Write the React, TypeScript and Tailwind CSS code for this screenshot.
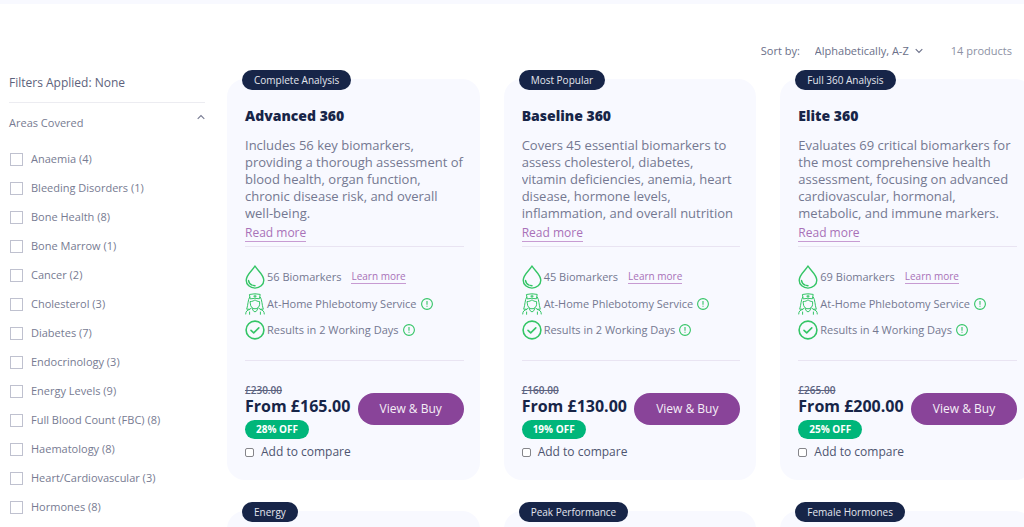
import { useState } from "react";

type Product = {
  id: string;
  tag: string;
  name: string;
  description: string;
  biomarkers: number;
  days: number;
  was: string;
  price: string;
  discount: string;
};

const PRODUCTS: Product[] = [
  {
    id: "advanced-360",
    tag: "Complete Analysis",
    name: "Advanced 360",
    description:
      "Includes 56 key biomarkers, providing a thorough assessment of blood health, organ function, chronic disease risk, and overall well-being.",
    biomarkers: 56,
    days: 2,
    was: "£230.00",
    price: "£165.00",
    discount: "28% OFF"
  },
  {
    id: "baseline-360",
    tag: "Most Popular",
    name: "Baseline 360",
    description:
      "Covers 45 essential biomarkers to assess cholesterol, diabetes, vitamin deficiencies, anemia, heart disease, hormone levels, inflammation, and overall nutrition",
    biomarkers: 45,
    days: 2,
    was: "£160.00",
    price: "£130.00",
    discount: "19% OFF"
  },
  {
    id: "elite-360",
    tag: "Full 360 Analysis",
    name: "Elite 360",
    description:
      "Evaluates 69 critical biomarkers for the most comprehensive health assessment, focusing on advanced cardiovascular, hormonal, metabolic, and immune markers.",
    biomarkers: 69,
    days: 4,
    was: "£265.00",
    price: "£200.00",
    discount: "25% OFF"
  }
];

const NEXT_TAGS = ["Energy", "Peak Performance", "Female Hormones"];

const AREAS = [
  { name: "Anaemia", count: 4 },
  { name: "Bleeding Disorders", count: 1 },
  { name: "Bone Health", count: 8 },
  { name: "Bone Marrow", count: 1 },
  { name: "Cancer", count: 2 },
  { name: "Cholesterol", count: 3 },
  { name: "Diabetes", count: 7 },
  { name: "Endocrinology", count: 3 },
  { name: "Energy Levels", count: 9 },
  { name: "Full Blood Count (FBC)", count: 8 },
  { name: "Haematology", count: 8 },
  { name: "Heart/Cardiovascular", count: 3 },
  { name: "Hormones", count: 8 }
];

const Chevron = ({ className }: { className?: string }) => (
  <svg viewBox="0 0 8 6" className={className} fill="none" stroke="currentColor" strokeWidth="1.1" aria-hidden="true">
    <path d="M0.7 1.2 4 4.5 7.3 1.2" />
  </svg>
);

const DropIcon = () => (
  <svg viewBox="0 0 20 24" className="h-6 w-5 shrink-0" fill="none" stroke="#34c566" strokeWidth="1.4" aria-hidden="true">
    <path d="M10 1C8.2 4.6 1.2 9.6 1.2 15.2a8.8 7.9 0 0 0 17.6 0C18.8 9.6 11.8 4.6 10 1Z" strokeLinejoin="round" />
    <path d="M3.5 15.4c.3 2.3 1.6 3.9 3.6 4.7M8.2 20.4l1.8.3" strokeLinecap="round" />
  </svg>
);

const NurseIcon = () => (
  <svg viewBox="0 0 20 22" className="h-[22px] w-5 shrink-0" fill="none" stroke="#34c566" strokeWidth="1" strokeLinejoin="round" strokeLinecap="round" aria-hidden="true">
    <path d="M4.8 1.4Q10 .1 15.2 1.4l-.8 4.4Q10 4.7 5.6 5.8Z" />
    <path d="M10 2v2.4M8.8 3.2h2.4" />
    <path d="M4.6 4.2C2.8 7 3.2 11.5 1.7 16.2h3.1l1.6-1.1M15.4 4.2c1.8 2.8 1.4 7.3 2.9 12h-3.1l-1.6-1.1" />
    <path d="M5.4 8.6c2.2-.2 3.5-.8 4.6-1.8 1.1 1 2.4 1.6 4.6 1.8v2.7c0 2.3-2 4.5-4.6 4.5s-4.6-2.2-4.6-4.5Z" />
    <path d="M7.7 15.5v1.7L10 19l2.3-1.8v-1.7M4.6 16.5C2.1 17 .7 18.3.7 21M15.4 16.5c2.5.5 3.9 1.8 3.9 4.5M4.6 19v2.3M15.4 19v2.3" />
  </svg>
);

const TickIcon = () => (
  <svg viewBox="0 0 20 20" className="size-5 shrink-0" fill="none" stroke="#34c566" strokeWidth="1.6" strokeLinecap="round" strokeLinejoin="round" aria-hidden="true">
    <circle cx="10" cy="10" r="8.9" />
    <path d="m6 10.3 2.7 2.5 5.1-4.9" />
  </svg>
);

const InfoButton = ({ label }: { label: string }) => (
  <button type="button" aria-label={label} className="ml-0.5 shrink-0">
    <svg viewBox="0 0 12 12" className="size-3" fill="none" stroke="#34c566" strokeWidth="1.1" aria-hidden="true">
      <circle cx="6" cy="6" r="5.4" />
      <path d="M6 3v3.7M6 7.8v1" />
    </svg>
  </button>
);

const Tag = ({ children }: { children: string }) => (
  <span className="absolute -top-[9px] left-[15px] flex h-5 items-center rounded-full bg-[#172548] px-3 text-[10px] whitespace-nowrap text-[#e3e5ee]">
    {children}
  </span>
);

const ProductCard = ({ product }: { product: Product }) => {
  const [compare, setCompare] = useState(false);

  return (
    <article className="relative rounded-[18px] bg-[#f8f9ff] pt-7 pr-4 pb-[19px] pl-[18px]">
      <Tag>{product.tag}</Tag>
      <h2 className="text-[14px] leading-[18px] font-extrabold text-[#172548]">{product.name}</h2>
      <p className="mt-3 h-[85px] overflow-hidden text-[13px] leading-[17px] text-[#747891]">{product.description}</p>
      <div className="flex h-[25px] items-start border-b border-[#e9e4f2] pt-[3px]">
        <a href={`#${product.id}`} className="border-b border-[#c79bd2] text-[12px] leading-4 text-[#a871b8]">
          Read more
        </a>
      </div>
      <ul className="mt-4 h-[97px] text-[11px] text-[#747891]">
        <li className="flex h-7 items-center gap-0.5">
          <DropIcon />
          <span>{product.biomarkers} Biomarkers</span>
          <a href={`#${product.id}-markers`} className="ml-2 border-b border-[#c79bd2] text-[10px] leading-[13px] text-[#a871b8]">
            Learn more
          </a>
        </li>
        <li className="flex h-[26px] items-center gap-0.5">
          <NurseIcon />
          <span>At-Home Phlebotomy Service</span>
          <InfoButton label="About the phlebotomy service" />
        </li>
        <li className="flex h-[26px] items-center gap-0.5">
          <TickIcon />
          <span>Results in {product.days} Working Days</span>
          <InfoButton label="About result times" />
        </li>
      </ul>
      <div className="flex items-start justify-between border-t border-[#e9e4f2] pt-[23px]">
        <div>
          <s className="block text-[10px] leading-3 font-semibold text-[#5c6380]">{product.was}</s>
          <p className="text-[16px] leading-5 font-bold whitespace-nowrap text-[#172548]">From {product.price}</p>
          <span className="mt-1 flex h-[19px] w-16 items-center justify-center rounded-full bg-[#00b67a] text-[10px] font-bold text-white">
            {product.discount}
          </span>
        </div>
        <button type="button" className="mt-[9px] h-8 w-[106px] shrink-0 rounded-full bg-[#894499] text-[12px] text-[#f5eef7]">
          View &amp; Buy
        </button>
      </div>
      <label className="mt-1 flex h-[18px] items-center gap-[7px] text-[12px] text-[#4e5570]">
        <input
          type="checkbox"
          checked={compare}
          onChange={(event) => setCompare(event.target.checked)}
          className="size-[9px] appearance-none rounded-[2px] border border-[#85858a] bg-white checked:bg-[#894499]"
        />
        Add to compare
      </label>
    </article>
  );
};

const Filters = () => {
  const [open, setOpen] = useState(true);

  return (
    <aside className="w-[196px] shrink-0 pt-[33px]">
      <p className="h-[30px] border-b border-[#ececf1] text-[12px] leading-5 text-[#5d627c]">Filters Applied: None</p>
      <button
        type="button"
        aria-expanded={open}
        onClick={() => setOpen(!open)}
        className="flex h-10 w-full items-center justify-between text-[11px] text-[#777b92]"
      >
        Areas Covered
        <Chevron className={open ? "mb-3 w-2 rotate-180" : "mb-3 w-2"} />
      </button>
      {open ? (
        <ul className="mt-0.5">
          {AREAS.map((area) => (
            <li key={area.name}>
              <label className="flex h-[29px] items-center gap-2 pl-px text-[11px] text-[#777b92]">
                <input type="checkbox" className="size-[13px] appearance-none border border-[#bfc1cf] checked:bg-[#172548]" />
                {area.name} ({area.count})
              </label>
            </li>
          ))}
        </ul>
      ) : null}
    </aside>
  );
};

export default function App() {
  return (
    <div className="h-screen overflow-hidden border-t-4 border-[#f8f9ff] bg-white pt-9 pl-[9px] font-['Open_Sans','Noto_Sans',sans-serif]">
      <div className="flex gap-[22px]">
        <Filters />
        <main className="min-w-0 flex-1">
          <div className="flex h-[22px] items-center justify-end pr-3 text-[11px] text-[#6b7089]">
            <label htmlFor="sort">Sort by:</label>
            <div className="relative ml-[15px] flex items-center">
              <select id="sort" className="appearance-none bg-transparent pr-[14px]">
                <option>Alphabetically, A-Z</option>
                <option>Alphabetically, Z-A</option>
              </select>
              <Chevron className="pointer-events-none absolute right-0 w-2" />
            </div>
            <span className="ml-7 text-[#8d91a4]">14 products</span>
          </div>
          <div className="-mr-[9px] mt-[17px] grid grid-cols-3 gap-x-6 gap-y-[31px]">
            {PRODUCTS.map((product) => (
              <ProductCard key={product.id} product={product} />
            ))}
            {NEXT_TAGS.map((tag) => (
              <article key={tag} className="relative h-[401px] rounded-[18px] bg-[#f8f9ff]">
                <Tag>{tag}</Tag>
              </article>
            ))}
          </div>
        </main>
      </div>
    </div>
  );
}
